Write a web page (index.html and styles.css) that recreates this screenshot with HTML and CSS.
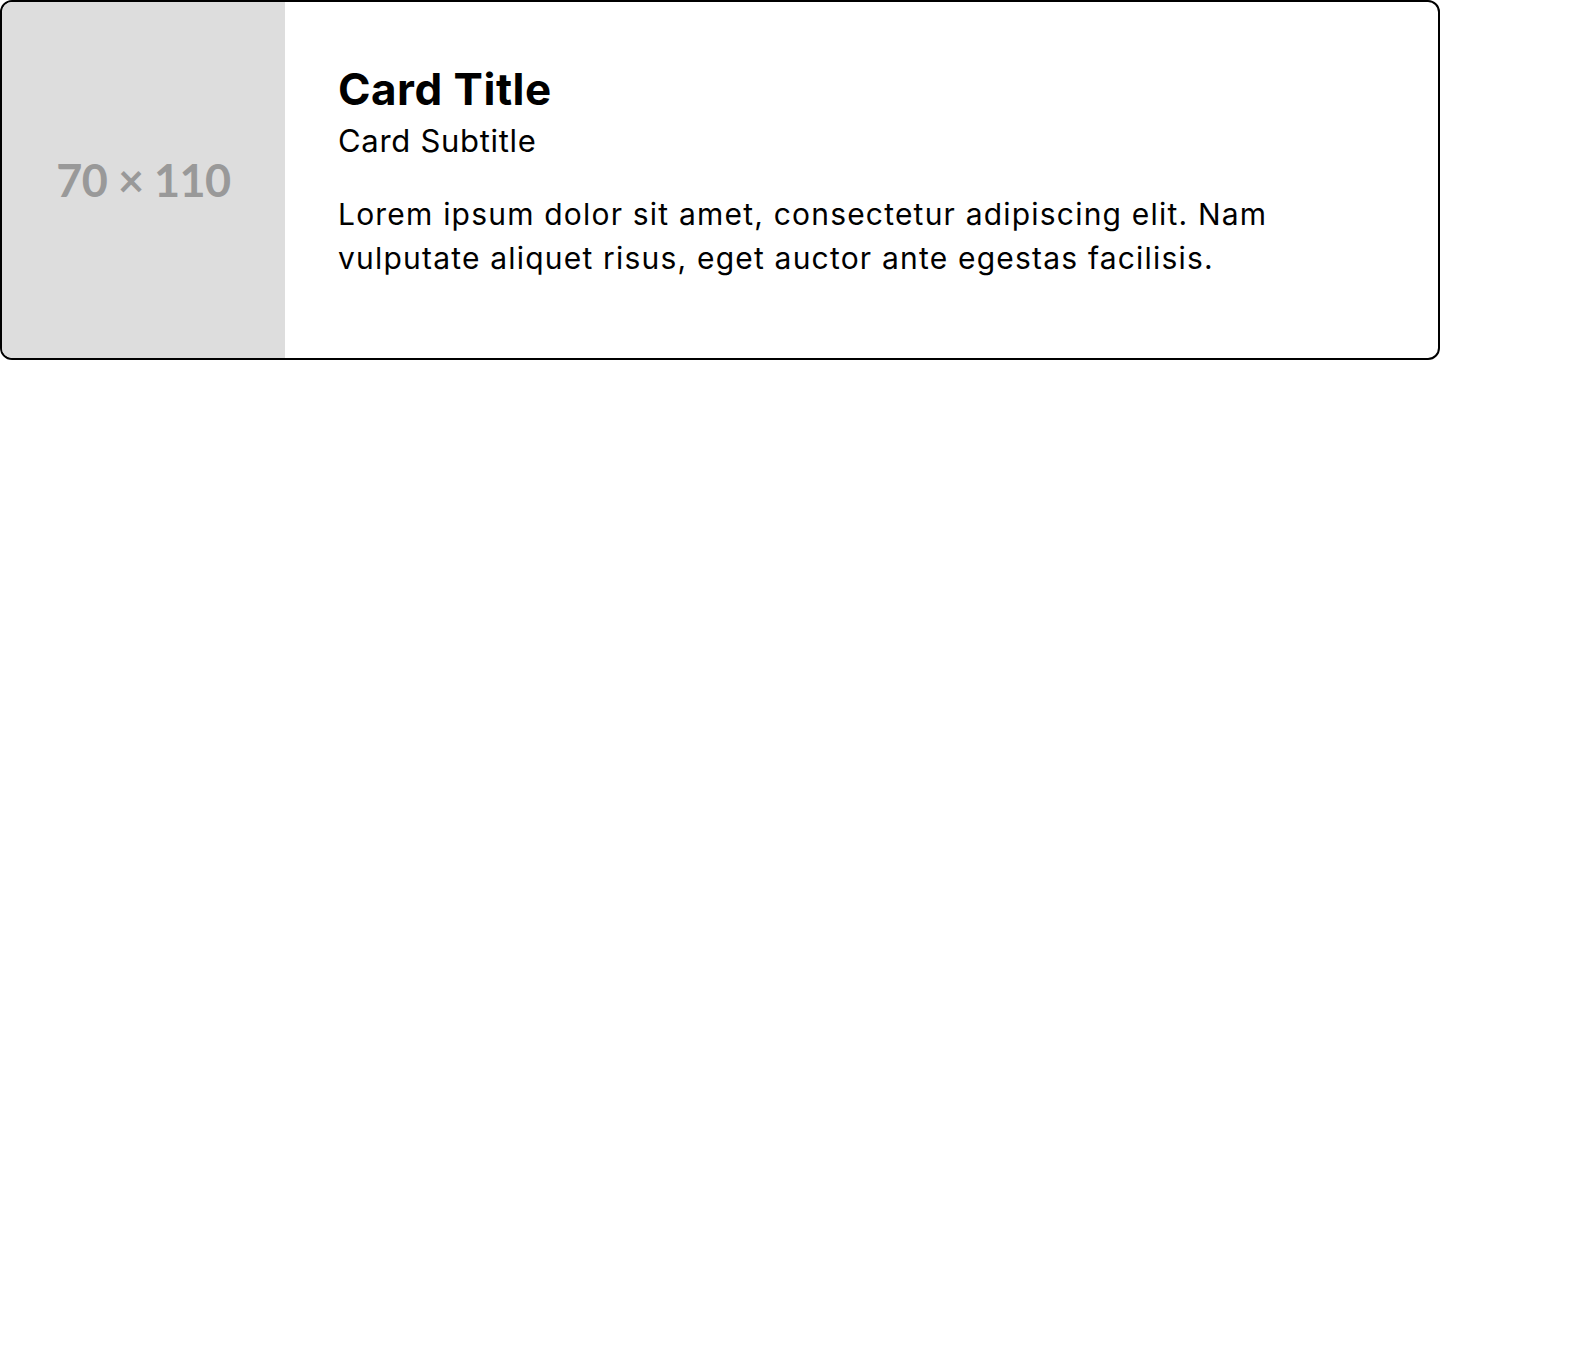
FILE: index.html
```html
<!DOCTYPE html>
<html>
<head>
<meta charset="utf-8">
<link rel="stylesheet" href="styles.css">
</head>
<body>
<div class="card">
  <div class="thumb"><span class="thumb-label">70 × 110</span></div>
  <div class="content">
    <h1 class="title">Card Title</h1>
    <p class="subtitle">Card Subtitle</p>
    <p class="text">Lorem ipsum dolor sit amet, consectetur adipiscing elit. Nam vulputate aliquet risus, eget auctor ante egestas facilisis.</p>
  </div>
</div>
</body>
</html>
```
FILE: styles.css
```css
html, body {
  margin: 0;
  padding: 0;
  background: #fff;
}
body {
  font-family: Inter, "Noto Sans", sans-serif;
  color: #000;
}
.card {
  width: 1440px;
  height: 360px;
  box-sizing: border-box;
  border: 2px solid #000;
  border-radius: 12px;
  overflow: hidden;
  display: flex;
}
.thumb {
  width: 283px;
  flex: none;
  background: #dddddd;
  display: flex;
  align-items: center;
  justify-content: center;
}
.thumb-label {
  font-family: Lato, sans-serif;
  font-weight: 700;
  font-size: 45px;
  letter-spacing: -0.5px;
  color: #999999;
}
.content {
  padding: 61px 60px 0 53px;
}
.title {
  margin: 0;
  font-size: 44px;
  font-weight: 700;
  line-height: 52px;
  letter-spacing: 0.5px;
}
.subtitle {
  margin: 6px 0 0;
  font-size: 31px;
  line-height: 40px;
  letter-spacing: 0.7px;
}
.text {
  margin: 31px 0 0;
  font-size: 30px;
  line-height: 44px;
  letter-spacing: 1.2px;
  max-width: 960px;
}
```
